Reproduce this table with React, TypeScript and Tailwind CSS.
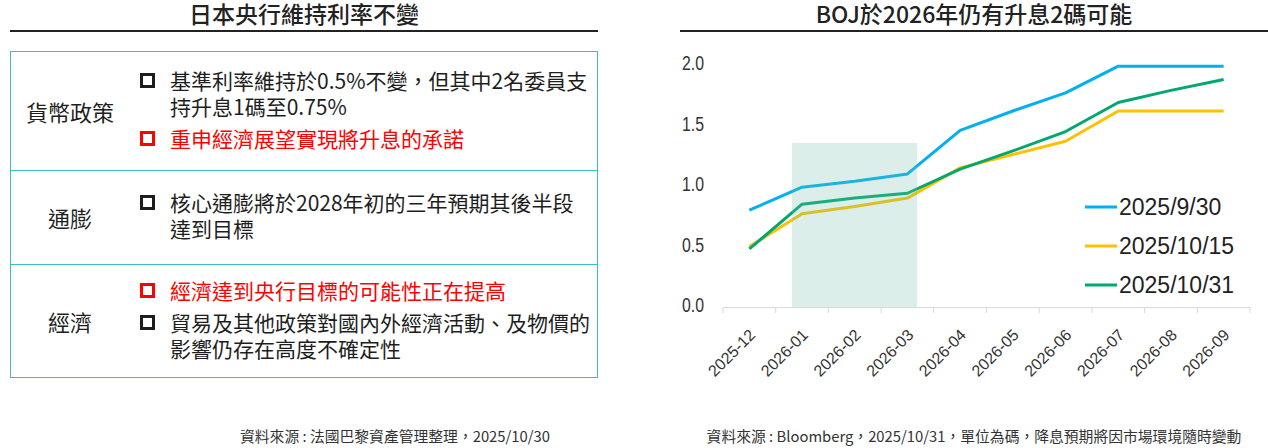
import React from "react";

const cjk = { fontFamily: '"Noto Sans CJK TC", "Noto Sans", sans-serif' };

// policy table rows
const rows = [
  {
    label: "貨幣政策",
    h: "h-[118px]",
    items: [
      { red: false, lines: ["基準利率維持於0.5%不變，但其中2名委員支", "持升息1碼至0.75%"] },
      { red: true, lines: ["重申經濟展望實現將升息的承諾"] },
    ],
  },
  {
    label: "通膨",
    h: "h-[94px]",
    items: [{ red: false, lines: ["核心通膨將於2028年初的三年預期其後半段", "達到目標"] }],
  },
  {
    label: "經濟",
    h: "h-[113px]",
    items: [
      { red: true, lines: ["經濟達到央行目標的可能性正在提高"] },
      { red: false, lines: ["貿易及其他政策對國內外經濟活動、及物價的", "影響仍存在高度不確定性"] },
    ],
  },
];

const months = [
  "2025-12", "2026-01", "2026-02", "2026-03", "2026-04",
  "2026-05", "2026-06", "2026-07", "2026-08", "2026-09",
];

const series = [
  { name: "2025/9/30", color: "#00b0f0", data: [0.8, 0.99, 1.04, 1.1, 1.46, 1.62, 1.77, 1.99, 1.99, 1.99] },
  { name: "2025/10/15", color: "#ffc000", data: [0.5, 0.77, 0.83, 0.9, 1.15, 1.26, 1.37, 1.62, 1.62, 1.62] },
  { name: "2025/10/31", color: "#00a870", data: [0.48, 0.85, 0.9, 0.94, 1.14, 1.29, 1.45, 1.69, 1.79, 1.88] },
];

const X0 = 723;
const STEP = 52.7;
const Y0 = 307;
const UNIT = 121;
const cx = (i: number) => X0 + STEP * (i + 0.5);
const cy = (v: number) => Y0 - v * UNIT;

function Bullet({ red }: { red: boolean }) {
  return (
    <span
      className={
        "mt-[6px] block h-[15px] w-[15px] shrink-0 border-[3px] " +
        (red ? "border-[#ff0000]" : "border-[#1e1e1e]")
      }
    />
  );
}

function Chart() {
  return (
    <svg viewBox="680 32 588 368" width={588} height={368} className="block">
      {/* y axis labels */}
      {[0, 0.5, 1, 1.5, 2].map((v) => (
        <text
          key={v}
          x={682}
          y={cy(v) + 5}
          fontSize={20}
          fill="#333"
          textLength={22}
          lengthAdjust="spacingAndGlyphs"
          fontFamily='"Liberation Sans", sans-serif'
        >
          {v.toFixed(1)}
        </text>
      ))}

      {/* x axis */}
      <line x1={X0} y1={Y0 + 0.5} x2={X0 + STEP * 10} y2={Y0 + 0.5} stroke="#d9d9d9" strokeWidth={1} />
      {Array.from({ length: 11 }).map((_, i) => (
        <line
          key={i}
          x1={X0 + STEP * i}
          y1={Y0}
          x2={X0 + STEP * i}
          y2={Y0 + 6}
          stroke="#d9d9d9"
          strokeWidth={1}
        />
      ))}
      {months.map((m, i) => (
        <text
          key={m}
          x={cx(i) + 7}
          y={Y0 + 29}
          fontSize={16}
          fill="#333"
          textAnchor="end"
          fontFamily='"Liberation Sans", sans-serif'
          transform={`rotate(-45 ${cx(i) + 7} ${Y0 + 29})`}
        >
          {m}
        </text>
      ))}

      {/* lines */}
      {series.map((s) => (
        <polyline
          key={s.name}
          points={s.data.map((v, i) => `${cx(i)},${cy(v)}`).join(" ")}
          fill="none"
          stroke={s.color}
          strokeWidth={3}
          strokeLinejoin="round"
        />
      ))}

      {/* shaded period */}
      <rect x={792} y={143} width={125} height={Y0 - 143} fill="#70bca8" fillOpacity={0.25} />

      {/* legend */}
      {series.map((s, i) => (
        <g key={s.name}>
          <line x1={1085} y1={207 + i * 39} x2={1117} y2={207 + i * 39} stroke={s.color} strokeWidth={3} />
          <text
            x={1119}
            y={207 + i * 39 + 8}
            fontSize={23}
            fill="#222"
            fontFamily='"Liberation Sans", sans-serif'
          >
            {s.name}
          </text>
        </g>
      ))}
    </svg>
  );
}

export default function App() {
  return (
    <div className="flex h-[448px] w-[1268px] bg-white text-[#1e1e1e]" style={cjk}>
      {/* left: policy table */}
      <div className="ml-[10px] flex w-[588px] flex-col">
        <h1 className="h-[30px] pt-px text-center text-[23px] font-medium leading-[24px] text-[#222]">
          日本央行維持利率不變
        </h1>
        <div className="h-[1.5px] bg-[#222]" />

        <div className="mt-[19px] border-[1.5px] border-[#3dbfbf]">
          {rows.map((r, ri) => (
            <div
              key={r.label}
              className={
                "flex items-center " + r.h + (ri > 0 ? " border-t-[1.5px] border-[#3dbfbf]" : "")
              }
            >
              <div className="w-[118px] shrink-0 text-center text-[22px] leading-[26px]">{r.label}</div>
              <div className="ml-[11px] flex -translate-y-[2px] flex-col gap-[6px]">
                {r.items.map((it, ii) => (
                  <div key={ii} className="flex gap-[15px]">
                    <Bullet red={it.red} />
                    <p
                      className={
                        "whitespace-nowrap text-[21px] leading-[26px] " +
                        (it.red ? "text-[#ff0000]" : "text-[#1e1e1e]")
                      }
                    >
                      {it.lines.map((l, li) => (
                        <span key={li} className="block">
                          {l}
                        </span>
                      ))}
                    </p>
                  </div>
                ))}
              </div>
            </div>
          ))}
        </div>

        <p className="mt-[48px] pl-[230px] text-[14.8px] leading-[20px] text-[#333]">
          資料來源 : 法國巴黎資產管理整理，2025/10/30
        </p>
      </div>

      {/* right: chart */}
      <div className="ml-[82px] flex w-[588px] flex-col">
        <h1 className="h-[30px] pt-px text-center text-[23px] font-medium leading-[24px] text-[#222]">
          BOJ於2026年仍有升息2碼可能
        </h1>
        <div className="h-[1.5px] bg-[#222]" />
        <Chart />
        <p className="mt-[26px] text-center text-[14.8px] leading-[20px] text-[#333]">
          資料來源 : Bloomberg，2025/10/31，單位為碼，降息預期將因市場環境隨時變動
        </p>
      </div>
    </div>
  );
}
